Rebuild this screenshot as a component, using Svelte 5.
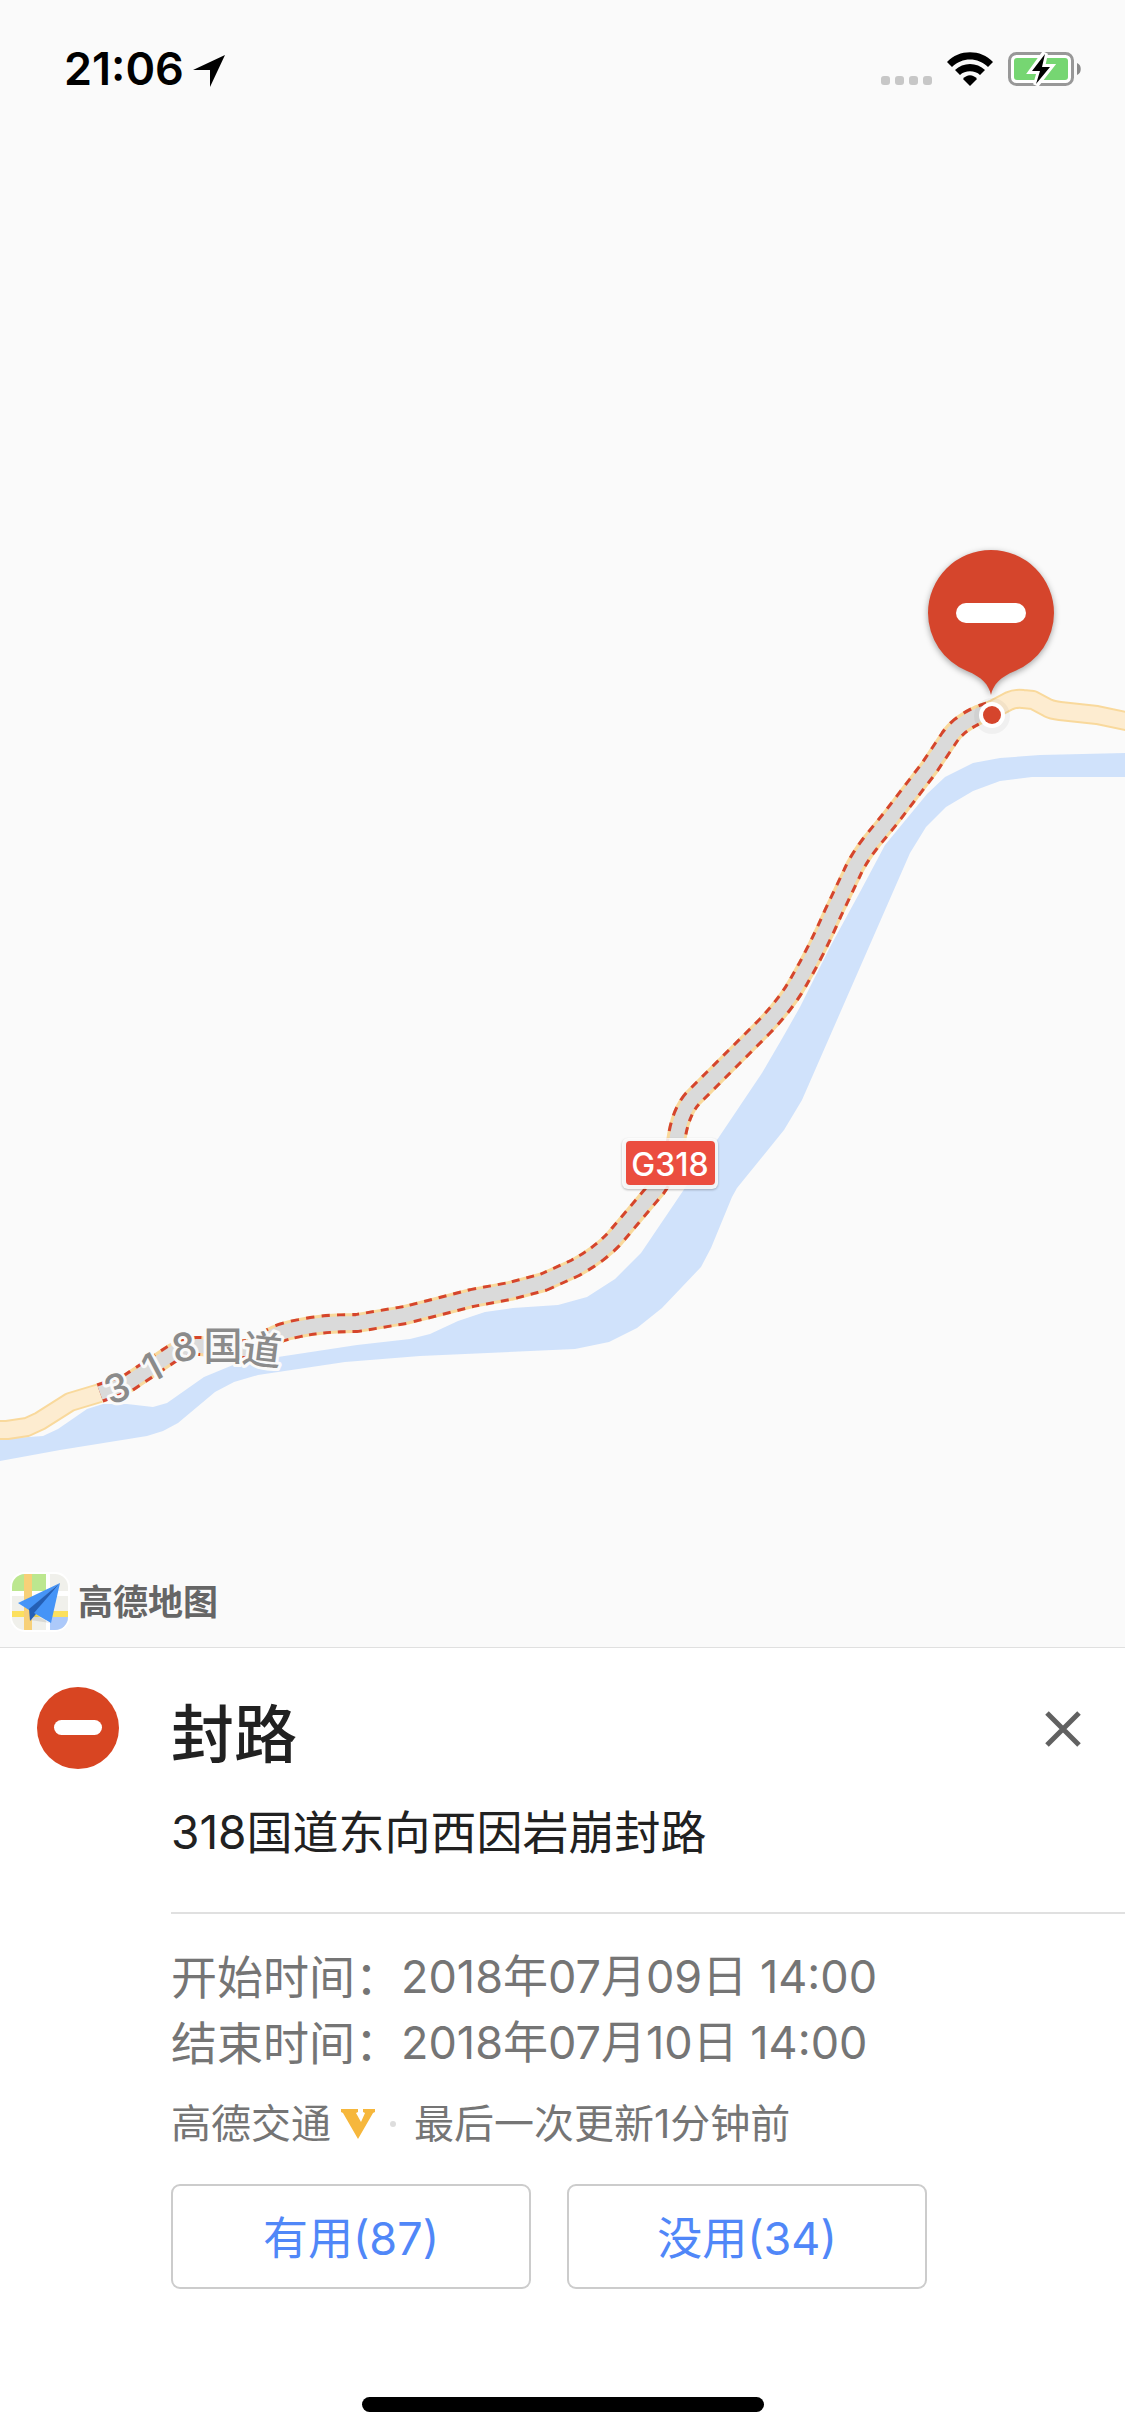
<script lang="ts">
  type Glyph = { char: string; x: number; y: number; angle: number };
  type Vote = "useful" | "useless";

  const river =
    "M1125 753 L1040 755 L1000 758 L973 763 L945 777 L927 794 L885 845 L860 892 L830 947 L800 1007 L783 1037 L762 1073 L717 1140 L687 1185 L641 1253 L615 1279 L587 1297 L558 1305 L513 1308 L485 1312 L458 1321 L430 1334 L410 1339 L357 1345 L278 1357 L233 1365 L204 1377 L167 1403 L153 1407 L127 1404 L103 1404 L87 1409 L58 1429 L43 1436 L0 1439 L0 1461 L60 1450 L147 1436 L163 1431 L178 1423 L215 1392 L234 1382 L258 1375 L345 1362 L420 1356 L575 1349 L609 1342 L637 1328 L662 1308 L701 1267 L711 1248 L732 1197 L737 1188 L784 1130 L802 1100 L910 853 L926 827 L946 807 L973 791 L1000 781 L1032 777 L1125 777 Z";

  const closedRoad =
    "M100 1393 L128 1383 L143 1373 L173 1353 Q186 1345 200 1346 L240 1349 Q256 1350 264 1343 Q272 1333 300 1328 Q322 1323 357 1323 L405 1315 L433 1308 L472 1298 L510 1291 L544 1282 L575 1268 Q599 1255 614 1239 L657 1188 Q673 1165 676 1142 Q680 1112 693 1098 L764 1027 Q787 1003 799 981 Q817 950 833 913 L852 873 Q858 859 872 841 L890 819 L929 768 L949 738 Q957 725 978 715 L992 710";

  const roadWest = "M-10 1430 L7 1430 L27 1427 L40 1421 L70 1402 L100 1393";
  const roadEast = "M992 710 L1009 701 Q1016 698 1023 699 L1033 700 L1048 708 Q1052 710 1060 711 L1097 715 L1135 723";

  const roadName: Glyph[] = [
    { char: "3", x: 117, y: 1388, angle: -20 },
    { char: "1", x: 152, y: 1367, angle: -28 },
    { char: "8", x: 184, y: 1347, angle: -12 },
    { char: "国", x: 223, y: 1346, angle: 0 },
    { char: "道", x: 262, y: 1350, angle: 7 }
  ];

  const times = [
    { label: "开始时间：", value: "2018年07月09日 14:00" },
    { label: "结束时间：", value: "2018年07月10日 14:00" }
  ];

  let open = $state(true);
  let vote = $state<Vote | null>(null);
  let useful = $derived(87 + (vote === "useful" ? 1 : 0));
  let useless = $derived(34 + (vote === "useless" ? 1 : 0));

  function cast(next: Vote) {
    vote = vote === next ? null : next;
  }
</script>

<div class="screen">
  <main class="map">
    <svg class="canvas" viewBox="0 0 1125 1647" preserveAspectRatio="xMidYMax slice" role="img" aria-label="318国道">
      <path class="river" d={river} />

      {#each [roadWest, roadEast, closedRoad] as d}
        <path class="road-edge" {d} />
      {/each}
      {#each [roadWest, roadEast] as d}
        <path class="road-fill" {d} />
      {/each}
      <path class="closed-dash" d={closedRoad} />
      <path class="closed-fill" d={closedRoad} />

      <g class="road-name">
        {#each roadName as g}
          <text transform="translate({g.x} {g.y}) rotate({g.angle})" y="14">{g.char}</text>
        {/each}
      </g>

      <g class="shield">
        <rect class="shield-frame" x="622" y="1138" width="96" height="51" rx="6" />
        <rect class="shield-face" x="626" y="1141" width="89" height="44" rx="4" />
        <text x="670" y="1176">G318</text>
      </g>

      <g class="spot">
        <circle class="spot-halo" cx="992" cy="716" r="18" />
        <circle cx="992" cy="715" r="13" fill="#fff" />
        <circle cx="992" cy="715" r="9" fill="#d5452c" />
      </g>

      <g class="pin">
        <path d="M928 613 A63 63 0 0 1 1054 613 A63 63 0 0 1 1015 671 C1000 677 993 685 991 695 C989 685 982 677 967 671 A63 63 0 0 1 928 613 Z" />
        <rect x="956" y="603" width="70" height="20" rx="10" />
      </g>
    </svg>

    <header class="status">
      <div class="clock">
        <span>21:06</span>
        <svg width="32" height="32" viewBox="0 0 32 32" aria-hidden="true">
          <path d="M32 0 L17 32 L17 15 L0 15 Z" />
        </svg>
      </div>
      <div class="signals">
        <div class="dots" aria-hidden="true"><i></i><i></i><i></i><i></i></div>
        <svg class="wifi" width="46" height="34" viewBox="0 0 46 34" aria-hidden="true">
          <path d="M0 10 C12 -3 34 -3 46 10 L41 15 C31 5 15 5 5 15 Z" />
          <path d="M8 18 C16 10 30 10 38 18 L33 23 C28 18 18 18 13 23 Z" />
          <path d="M16 27 C20 22 26 22 30 27 L23 34 Z" />
        </svg>
        <svg width="74" height="36" viewBox="0 0 74 36" aria-hidden="true">
          <rect x="1.5" y="2.5" width="63" height="31" rx="7" fill="#fff" stroke="#989898" stroke-width="3" />
          <rect x="6" y="7" width="54" height="22" rx="3" fill="#76d672" />
          <path d="M69 12 C74 13.500 74 22.500 69 24 Z" fill="#8a8a8a" />
          <path d="M37 2 L24 20 L32 20 L28 34 L42 16 L34 16 Z" fill="#fff" stroke="#fff" stroke-width="6" />
          <path d="M37 3 L24 20 L32 20 L28 33 L42 16 L34 16 Z" />
        </svg>
      </div>
    </header>

    <div class="brand">
      <svg width="60" height="60" viewBox="0 0 60 60" aria-hidden="true">
        <defs>
          <clipPath id="tile"><rect x="2" y="2" width="56" height="56" rx="13" /></clipPath>
        </defs>
        <rect width="60" height="60" rx="15" fill="#fff" />
        <g clip-path="url(#tile)">
          <rect width="60" height="60" fill="#f0f0eb" />
          <rect width="36" height="19" fill="#bce78f" />
          <rect x="40" y="39" width="20" height="21" fill="#acc9fa" />
          <rect y="19" width="60" height="5" fill="#fff" />
          <rect x="36" width="4" height="60" fill="#fff" />
          <rect y="39" width="60" height="6" fill="#fce05e" />
          <rect x="14" width="8" height="60" fill="#f7d078" />
          <path d="M20 48 L40 51 L24 42 Z" fill="#00000018" />
        </g>
        <path d="M50 11 L8 31 L19 38 Z" fill="#4594f7" />
        <path d="M50 11 L19 37 L20 49 L26 42 Z" fill="#245fb5" />
        <path d="M50 11 L24 41 L41 51 Z" fill="#4594f7" />
      </svg>
      <span>高德地图</span>
    </div>
  </main>

  {#if open}
    <section class="sheet" aria-labelledby="event-title">
      <div class="summary">
        <svg class="badge" width="82" height="82" viewBox="0 0 82 82" aria-hidden="true">
          <circle cx="41" cy="41" r="41" fill="#d84522" />
          <rect x="17" y="33" width="48" height="15" rx="7.500" fill="#fff" />
        </svg>
        <div class="heading">
          <h1 id="event-title">封路</h1>
          <p>318国道东向西因岩崩封路</p>
        </div>
        <button class="close" type="button" aria-label="关闭" onclick={() => (open = false)}>
          <svg width="36" height="36" viewBox="0 0 36 36" aria-hidden="true">
            <path d="M2 2 L34 34 M34 2 L2 34" stroke="#616161" stroke-width="5" />
          </svg>
        </button>
      </div>

      <div class="details">
        <dl>
          {#each times as time (time.label)}
            <div>
              <dt>{time.label}</dt>
              <dd>{time.value}</dd>
            </div>
          {/each}
        </dl>

        <div class="source">
          <span>高德交通</span>
          <svg width="34" height="30" viewBox="0 0 34 30" aria-hidden="true">
            <path d="M0 0 H17 V3 L15 4 L20 13 L24 4 L22 3 V0 H34 V3 L32 4 L17 30 L2 4 L0 3 Z" fill="#f6b73c" />
          </svg>
          <i aria-hidden="true"></i>
          <span>最后一次更新1分钟前</span>
        </div>

        <div class="votes">
          <button type="button" aria-pressed={vote === "useful"} onclick={() => cast("useful")}>有用({useful})</button>
          <button type="button" aria-pressed={vote === "useless"} onclick={() => cast("useless")}>没用({useless})</button>
        </div>
      </div>

      <div class="home-bar" aria-hidden="true"></div>
    </section>
  {/if}
</div>

<style>
  :global(body) {
    background: #fff;
  }

  .screen {
    display: flex;
    flex-direction: column;
    min-height: 100vh;
    font-family: Inter, "Noto Sans CJK SC", sans-serif;
    color: #212121;
  }

  .map {
    position: relative;
    flex: 1;
    display: flex;
    flex-direction: column;
    justify-content: space-between;
    background: #fafafa;
  }

  .canvas {
    position: absolute;
    inset: 0;
    width: 100%;
    height: 100%;
  }

  .river {
    fill: #d0e2fb;
  }

  .road-edge,
  .road-fill,
  .closed-dash,
  .closed-fill {
    fill: none;
    stroke-linejoin: round;
  }

  .road-edge {
    stroke: #f9d99c;
    stroke-width: 20;
  }

  .road-fill {
    stroke: #fdecd0;
    stroke-width: 16;
  }

  .closed-dash {
    stroke: #d5452c;
    stroke-width: 20;
    stroke-dasharray: 8 7;
  }

  .closed-fill {
    stroke: #dadada;
    stroke-width: 14;
  }

  .road-name text {
    font-size: 39px;
    font-weight: 500;
    text-anchor: middle;
    fill: #8b8b8b;
    stroke: #fafafa;
    stroke-width: 6;
    stroke-linejoin: round;
    paint-order: stroke;
  }

  .shield-frame {
    fill: #fff;
    fill-opacity: 0.85;
    filter: drop-shadow(0 1px 1px rgba(0, 0, 0, 0.3));
  }

  .shield-face {
    fill: #eb4d3f;
  }

  .shield text {
    font-size: 32px;
    font-weight: 500;
    text-anchor: middle;
    fill: #fff;
  }

  .spot-halo {
    fill: rgba(0, 0, 0, 0.04);
  }

  .pin {
    filter: drop-shadow(0 2px 3px rgba(0, 0, 0, 0.35));
  }

  .pin path {
    fill: #d5452c;
  }

  .pin rect {
    fill: #fff;
  }

  .status {
    position: relative;
    display: flex;
    justify-content: space-between;
    align-items: center;
    padding: 40px 43px 0 64px;
    color: #000;
  }

  .clock {
    display: flex;
    align-items: center;
    gap: 9px;
    font-size: 45px;
    line-height: 58px;
    font-weight: 600;
  }

  .clock svg {
    margin-top: 4px;
  }

  .signals {
    display: flex;
    align-items: center;
    gap: 15px;
  }

  .dots {
    display: flex;
    gap: 5px;
    margin-top: 22px;
  }

  .dots i {
    width: 9px;
    height: 9px;
    border-radius: 3px;
    background: #c7c7c7;
  }

  .brand {
    position: relative;
    display: flex;
    align-items: center;
    gap: 8px;
    padding: 0 0 15px 10px;
    font-size: 35px;
    line-height: 60px;
    font-weight: 700;
    color: #666;
  }

  .sheet {
    border-top: 1px solid #e0e0e0;
    background: #fff;
  }

  .summary {
    display: grid;
    grid-template-columns: 134px 1fr auto;
    align-items: start;
    padding: 39px 36px 0 37px;
  }

  .heading {
    padding-bottom: 47px;
  }

  h1 {
    margin: 0;
    font-size: 63px;
    line-height: 94px;
    font-weight: 500;
  }

  .heading p {
    margin: 18px 0 0;
    font-size: 46px;
    line-height: 66px;
  }

  .close {
    display: flex;
    margin-top: 16px;
    padding: 8px;
    border: 0;
    background: none;
    cursor: pointer;
  }

  .details {
    margin-left: 171px;
    padding-top: 30px;
    border-top: 2px solid #e0e0e0;
    color: #757575;
  }

  dl {
    margin: 0;
    font-size: 45px;
    line-height: 66px;
  }

  dl div {
    display: flex;
  }

  dt {
    font-size: 46px;
  }

  dd {
    margin: 0;
  }

  .source {
    display: flex;
    align-items: center;
    margin-top: 18px;
    font-size: 40px;
    line-height: 60px;
  }

  .source svg {
    margin-left: 10px;
  }

  .source i {
    width: 6px;
    height: 6px;
    margin: 0 18px 0 15px;
    border-radius: 50%;
    background: #ddd;
  }

  .votes {
    display: flex;
    gap: 36px;
    margin-top: 30px;
  }

  .votes button {
    width: 360px;
    height: 105px;
    padding: 0 0 2px;
    border: 2px solid #ccc;
    border-radius: 9px;
    background: #fff;
    font: inherit;
    font-size: 45px;
    color: #5087f8;
    cursor: pointer;
  }

  .home-bar {
    width: 402px;
    height: 15px;
    margin: 108px auto 24px;
    border-radius: 8px;
    background: #000;
  }
</style>
